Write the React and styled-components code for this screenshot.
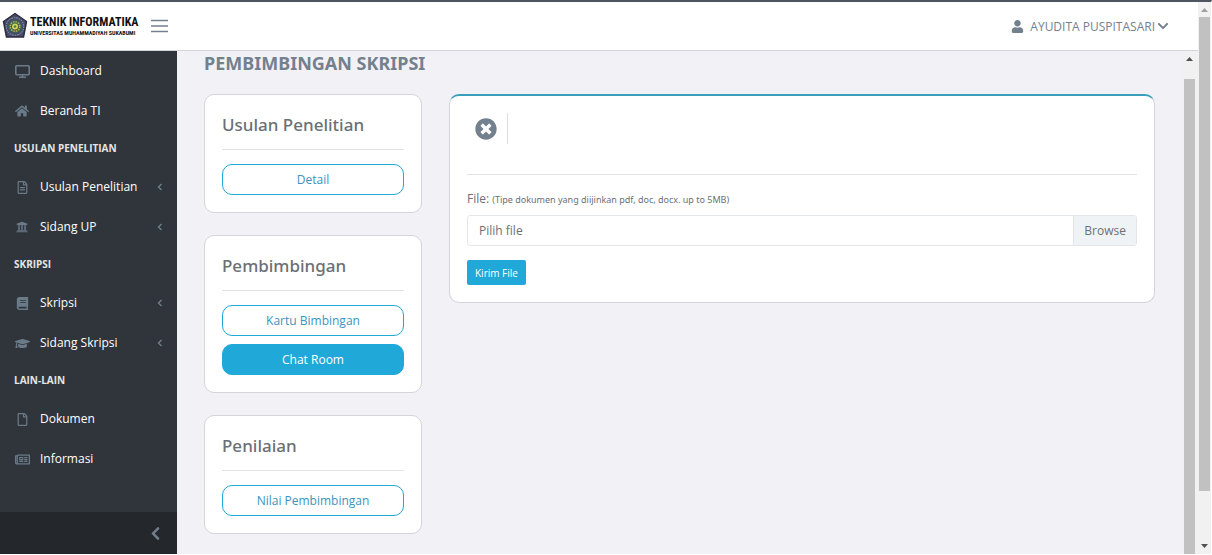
import React from "react";
import styled, { createGlobalStyle, css } from "styled-components";
import {
  FaHome,
  FaRegFileAlt,
  FaUniversity,
  FaBook,
  FaGraduationCap,
  FaRegFile,
  FaRegNewspaper,
  FaTimesCircle,
  FaUser,
  FaChevronDown,
  FaChevronLeft,
} from "react-icons/fa";

const c = {
  primary: "#20a8d8",
  gray: "#73818f",
  text: "#6b7075",
  dark: "#2f353a",
  darker: "#24282c",
  border: "#d3d5db",
  line: "#e1e3e6",
  bg: "#f2f1f6",
};

const GlobalStyle = createGlobalStyle`
  *, *::before, *::after { box-sizing: border-box; }
  body {
    margin: 0;
    background: #fff;
    color: ${c.text};
    font-family: "Open Sans", "Noto Sans", sans-serif;
    font-size: 12px;
    line-height: 18px;
  }
  h1, h2, p, ul { margin: 0; padding: 0; }
  ul { list-style: none; }
  button { font-family: inherit; cursor: pointer; }
`;

const Frame = styled.div`
  display: flex;
  height: 100vh;
  border-top: 2px solid #4c5560;
  border-bottom: 1px solid #fff;
  border-right: 1px solid #fff;
`;

const Page = styled.div`
  flex: 1;
  min-width: 0;
  display: flex;
  flex-direction: column;
`;

const Header = styled.header`
  flex: none;
  display: flex;
  align-items: center;
  height: 49px;
  padding-right: 29px;
  background: #fff;
  border-bottom: 1px solid ${c.border};
`;

const Brand = styled.a`
  display: flex;
  align-items: center;
  gap: 2px;
  width: 151px;
  padding-left: 2px;
  color: #111;
  text-decoration: none;
  white-space: nowrap;
  svg { flex: none; }
`;

const BrandText = styled.span`
  display: flex;
  flex-direction: column;
  font-family: "Roboto Condensed", "Liberation Sans", sans-serif;
  font-weight: 700;
`;

const BrandName = styled.span`
  font-size: 12px;
  line-height: 13px;
`;

const BrandSub = styled.span`
  font-size: 6px;
  line-height: 7px;
`;

const MenuButton = styled.button`
  display: flex;
  padding: 0;
  border: 0;
  background: none;
`;

const UserButton = styled.button`
  display: flex;
  align-items: center;
  margin-left: auto;
  padding: 0;
  border: 0;
  background: none;
  color: ${c.gray};
  font-size: 12px;
  gap: 2px;
  svg:first-child { margin-right: 4px; }
`;

const Body = styled.div`
  flex: 1;
  min-height: 0;
  display: flex;
`;

const Sidebar = styled.aside`
  flex: none;
  width: 177px;
  display: flex;
  flex-direction: column;
  background: ${c.dark};
`;

const Nav = styled.nav`
  flex: 1;
  min-height: 0;
  overflow: hidden;
`;

const NavTitle = styled.li`
  padding: 8px 14px 10px;
  color: #e4e5e6;
  font-size: 10px;
  font-weight: 700;
`;

const NavLink = styled.a`
  display: flex;
  align-items: center;
  height: 40px;
  padding: 0 14px;
  gap: 10px;
  color: #fff;
  font-size: 12px;
  font-weight: 500;
  text-decoration: none;
`;

const NavIcon = styled.span`
  display: flex;
  justify-content: center;
  width: 16px;
  color: #6a7a88;
`;

const Caret = styled.svg`
  margin-left: auto;
`;

const Minimizer = styled.button`
  display: flex;
  flex: none;
  align-items: center;
  justify-content: flex-end;
  height: 42px;
  padding: 0 14px;
  border: 0;
  background: ${c.darker};
  color: ${c.gray};
`;

const Main = styled.main`
  flex: 1;
  min-width: 0;
  overflow: hidden;
  padding: 0 28px 0 27px;
  background: ${c.bg};
`;

const PageTitle = styled.h1`
  padding-bottom: 19px;
  font-family: "Noto Sans", sans-serif;
  font-size: 18px;
  font-weight: 700;
  line-height: 24px;
  color: ${c.gray};
`;

const Columns = styled.div`
  display: flex;
  align-items: flex-start;
  gap: 27px;
`;

const SideColumn = styled.div`
  flex: none;
  width: 218px;
  display: flex;
  flex-direction: column;
  gap: 22px;
`;

const Card = styled.section`
  padding: 17px;
  background: #fff;
  border: 1px solid ${c.border};
  border-radius: 10px;
  ${(p) =>
    p.$accent &&
    css`
      flex: 1;
      min-width: 0;
      border-top: 2px solid #3a9fba;
    `}
`;

const CardTitle = styled.h2`
  padding-bottom: 12px;
  border-bottom: 1px solid ${c.line};
  font-family: "Noto Sans", sans-serif;
  font-size: 17px;
  font-weight: 500;
  line-height: 25px;
`;

const Actions = styled.div`
  display: flex;
  flex-direction: column;
  gap: 8px;
  padding-top: 14px;
`;

const PillButton = styled.button`
  height: 31px;
  padding: 0 12px;
  border: 1px solid ${c.primary};
  border-radius: 10px;
  background: ${(p) => (p.$solid ? c.primary : "#fff")};
  color: ${(p) => (p.$solid ? "#fff" : "#3c93c0")};
  font-size: 12px;
`;

const ChatHead = styled.div`
  display: flex;
  align-items: flex-start;
  height: 62px;
  padding-left: 8px;
  border-bottom: 1px solid ${c.line};
`;

const CloseBox = styled.div`
  display: flex;
  align-items: center;
  height: 31px;
  padding-right: 10px;
  border-right: 1px solid #dcdce2;
`;

const CloseButton = styled.button`
  display: flex;
  padding: 0;
  border: 0;
  background: none;
  color: ${c.gray};
`;

const Form = styled.form`
  padding-top: 15px;
`;

const FieldLabel = styled.label`
  display: block;
  padding-bottom: 6px;
  small {
    font-family: "Noto Sans", sans-serif;
    font-size: 9px;
  }
`;

const FileField = styled.div`
  position: relative;
  display: flex;
  height: 31px;
  border: 1px solid #e4e7ea;
  border-radius: 3px;
  overflow: hidden;
  line-height: 29px;
`;

const FileInput = styled.input`
  position: absolute;
  inset: 0;
  width: 100%;
  opacity: 0;
  cursor: pointer;
`;

const FileName = styled.span`
  flex: 1;
  padding-left: 11px;
`;

const Browse = styled.span`
  padding: 0 10px;
  background: #f0f3f5;
  border-left: 1px solid #e4e7ea;
`;

const SubmitButton = styled.button`
  height: 25px;
  margin-top: 14px;
  padding: 0 8px;
  border: 0;
  border-radius: 2px;
  background: ${c.primary};
  color: #fff;
  font-size: 10px;
`;

const Scrollbar = styled.div`
  flex: none;
  display: flex;
  flex-direction: column;
  align-items: center;
  width: 13px;
  background: #f1f1f2;
  ${(p) =>
    p.$inner &&
    css`
      width: 15px;
      padding-right: 2px;
    `}
  svg { flex: none; }
`;

const Thumb = styled.div`
  flex: ${(p) => p.$grow};
  width: 11px;
  background: #c1c1c1;
`;

const Track = styled.div`
  flex: ${(p) => p.$grow};
`;

function Arrow({ down, height = 15, color = "#505050" }) {
  return (
    <svg width="13" height={height} viewBox={`0 0 13 ${height}`} aria-hidden="true">
      <path d={down ? "M3 5h7l-3.500 4z" : "M3 10h7l-3.500-4z"} fill={color} />
    </svg>
  );
}

function Emblem() {
  return (
    <svg width="26" height="28" viewBox="0 0 26 28" aria-hidden="true">
      <path d="M13 1.500 24.500 9.500 21.500 25H4.500L1.500 9.500Z" fill="#474b70" stroke="#2a2d3e" strokeWidth="1.500" strokeLinejoin="round" />
      <circle cx="13" cy="14.500" r="8.800" fill="none" stroke="#9a9fae" strokeWidth="1" strokeDasharray="1.500 1" />
      <circle cx="13" cy="14.500" r="6.800" fill="#39624f" />
      <circle cx="13" cy="14.500" r="4.800" fill="none" stroke="#b5b24c" strokeWidth="1.600" strokeDasharray="1.500 1" />
      <circle cx="13" cy="14.500" r="3" fill="#d8cf55" />
      <circle cx="13" cy="14.500" r="1.300" fill="#4a7e52" />
    </svg>
  );
}

function ScreenIcon() {
  return (
    <svg width="15" height="13" viewBox="0 0 15 13" fill="none" stroke="currentColor" aria-hidden="true">
      <rect x="0.800" y="0.800" width="13.400" height="9" rx="1" strokeWidth="1.600" />
      <path d="M7.500 10v2M4 12.200h7" strokeWidth="1.600" />
    </svg>
  );
}

const menu = [
  { label: "Dashboard", icon: <ScreenIcon /> },
  { label: "Beranda TI", icon: <FaHome size={14} /> },
  { title: "USULAN PENELITIAN" },
  { label: "Usulan Penelitian", icon: <FaRegFileAlt size={13} />, more: true },
  { label: "Sidang UP", icon: <FaUniversity size={12} />, more: true },
  { title: "SKRIPSI" },
  { label: "Skripsi", icon: <FaBook size={13} />, more: true },
  { label: "Sidang Skripsi", icon: <FaGraduationCap size={15} />, more: true },
  { title: "LAIN-LAIN" },
  { label: "Dokumen", icon: <FaRegFile size={13} /> },
  { label: "Informasi", icon: <FaRegNewspaper size={15} /> },
];

const panels = [
  { title: "Usulan Penelitian", actions: [{ label: "Detail" }] },
  { title: "Pembimbingan", actions: [{ label: "Kartu Bimbingan" }, { label: "Chat Room", solid: true }] },
  { title: "Penilaian", actions: [{ label: "Nilai Pembimbingan" }] },
];

export default function App() {
  return (
    <>
      <GlobalStyle />
      <Frame>
        <Page>
          <Header>
            <Brand href="#">
              <Emblem />
              <BrandText>
                <BrandName>TEKNIK INFORMATIKA</BrandName>
                <BrandSub>UNIVERSITAS MUHAMMADIYAH SUKABUMI</BrandSub>
              </BrandText>
            </Brand>
            <MenuButton type="button" aria-label="Menu">
              <svg width="17" height="14" viewBox="0 0 17 14" stroke={c.gray} strokeWidth="1.300" aria-hidden="true">
                <path d="M0 1.500h17M0 7h17M0 12.500h17" />
              </svg>
            </MenuButton>
            <UserButton type="button">
              <FaUser size={13} />
              AYUDITA PUSPITASARI
              <FaChevronDown size={12} />
            </UserButton>
          </Header>
          <Body>
            <Sidebar>
              <Nav>
                <ul>
                  {menu.map((m) =>
                    m.title ? (
                      <NavTitle key={m.title}>{m.title}</NavTitle>
                    ) : (
                      <li key={m.label}>
                        <NavLink href="#">
                          <NavIcon>{m.icon}</NavIcon>
                          {m.label}
                          {m.more && (
                            <Caret width="6" height="8" viewBox="0 0 6 8" fill="none" stroke={c.gray} strokeWidth="1.300" aria-hidden="true">
                              <path d="M4.500 1 1.500 4l3 3" />
                            </Caret>
                          )}
                        </NavLink>
                      </li>
                    )
                  )}
                </ul>
              </Nav>
              <Minimizer type="button" aria-label="Minimize">
                <FaChevronLeft size={15} />
              </Minimizer>
            </Sidebar>
            <Main>
              <PageTitle>PEMBIMBINGAN SKRIPSI</PageTitle>
              <Columns>
                <SideColumn>
                  {panels.map((p) => (
                    <Card key={p.title}>
                      <CardTitle>{p.title}</CardTitle>
                      <Actions>
                        {p.actions.map((a) => (
                          <PillButton key={a.label} type="button" $solid={a.solid}>
                            {a.label}
                          </PillButton>
                        ))}
                      </Actions>
                    </Card>
                  ))}
                </SideColumn>
                <Card $accent>
                  <ChatHead>
                    <CloseBox>
                      <CloseButton type="button" aria-label="Close">
                        <FaTimesCircle size={22} />
                      </CloseButton>
                    </CloseBox>
                  </ChatHead>
                  <Form onSubmit={(e) => e.preventDefault()}>
                    <FieldLabel htmlFor="file">
                      File: <small>(Tipe dokumen yang diijinkan pdf, doc, docx. up to 5MB)</small>
                    </FieldLabel>
                    <FileField>
                      <FileName>Pilih file</FileName>
                      <Browse>Browse</Browse>
                      <FileInput id="file" type="file" />
                    </FileField>
                    <SubmitButton type="submit">Kirim File</SubmitButton>
                  </Form>
                </Card>
              </Columns>
            </Main>
            <Scrollbar $inner aria-hidden="true">
              <Arrow height={28} />
              <Thumb $grow={1} />
            </Scrollbar>
          </Body>
        </Page>
        <Scrollbar aria-hidden="true">
          <Arrow color="#a0a0a0" />
          <Thumb $grow={474} />
          <Track $grow={48} />
          <Arrow down />
        </Scrollbar>
      </Frame>
    </>
  );
}
